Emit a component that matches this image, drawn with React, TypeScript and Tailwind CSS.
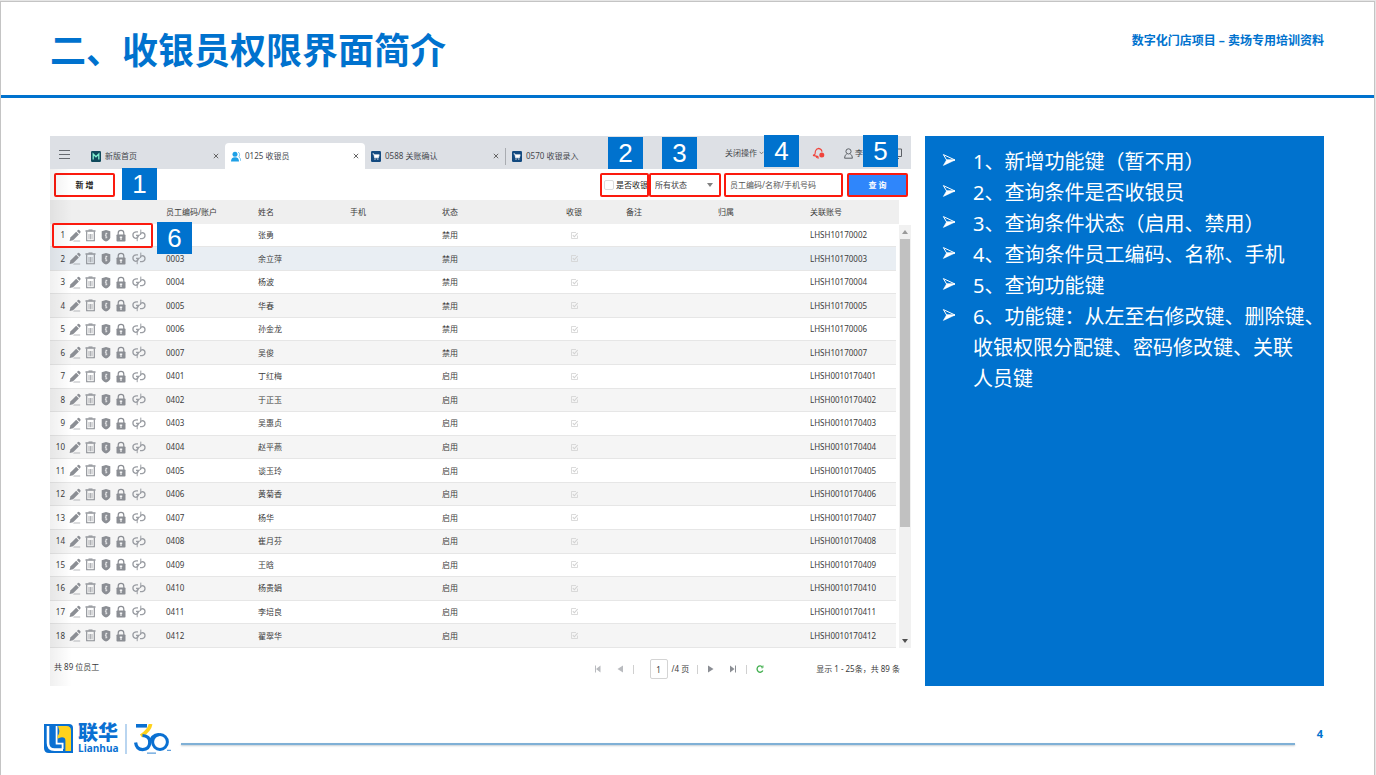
import { useState } from "react";
import type { ReactNode } from "react";

type Cashier = {
	code?: string;
	name: string;
	status: "启用" | "禁用";
	account: string;
};

const cashiers: Cashier[] = [
	{ name: "张勇", status: "禁用", account: "LHSH10170002" },
	{ code: "0003", name: "余立萍", status: "禁用", account: "LHSH10170003" },
	{ code: "0004", name: "杨波", status: "禁用", account: "LHSH10170004" },
	{ code: "0005", name: "华春", status: "禁用", account: "LHSH10170005" },
	{ code: "0006", name: "孙金龙", status: "禁用", account: "LHSH10170006" },
	{ code: "0007", name: "吴俊", status: "禁用", account: "LHSH10170007" },
	{ code: "0401", name: "丁红梅", status: "启用", account: "LHSH0010170401" },
	{ code: "0402", name: "于正玉", status: "启用", account: "LHSH0010170402" },
	{ code: "0403", name: "吴惠贞", status: "启用", account: "LHSH0010170403" },
	{ code: "0404", name: "赵平燕", status: "启用", account: "LHSH0010170404" },
	{ code: "0405", name: "谈玉玲", status: "启用", account: "LHSH0010170405" },
	{ code: "0406", name: "黄菊香", status: "启用", account: "LHSH0010170406" },
	{ code: "0407", name: "杨华", status: "启用", account: "LHSH0010170407" },
	{ code: "0408", name: "崔月芬", status: "启用", account: "LHSH0010170408" },
	{ code: "0409", name: "王晗", status: "启用", account: "LHSH0010170409" },
	{ code: "0410", name: "杨贵娟", status: "启用", account: "LHSH0010170410" },
	{ code: "0411", name: "李培良", status: "启用", account: "LHSH0010170411" },
	{ code: "0412", name: "翟翠华", status: "启用", account: "LHSH0010170412" },
];

const notes: string[][] = [
	["1、新增功能键（暂不用）"],
	["2、查询条件是否收银员"],
	["3、查询条件状态（启用、禁用）"],
	["4、查询条件员工编码、名称、手机"],
	["5、查询功能键"],
	["6、功能键：从左至右修改键、删除键、", "收银权限分配键、密码修改键、关联", "人员键"],
];

/* Row action icons */

function PencilIcon() {
	return (
		<svg viewBox="0 0 12 13" className="h-[13px] w-[12px]" fill="#8b8e94">
			<path d="M0.6 12 1.4 8.6 7.2 2.8 9.9 5.5 4.1 11.2Z" />
			<path d="M7.9 2.1 9 1Q9.6.5 10.2 1L11.4 2.2Q12 2.9 11.4 3.5L10.5 4.7Z" />
			<path d="M5 11.4H11.2V12.4H4Z" opacity=".6" />
		</svg>
	);
}

function TrashIcon() {
	return (
		<svg viewBox="0 0 11 13" className="h-[13px] w-[11px]" fill="none" stroke="#8b8e94">
			<path d="M0.5 2H10.5" strokeWidth="1.4" />
			<path d="M3.5 1H7.5" strokeWidth="1" />
			<path d="M1.7 2.5V11.8H9.3V2.5" strokeWidth="1.1" />
			<path d="M4 5V10.3M5.5 5V10.3M7 5V10.3" strokeWidth=".9" opacity=".75" />
		</svg>
	);
}

function ShieldIcon() {
	return (
		<svg viewBox="0 0 10 13" className="h-[13px] w-[10px]">
			<path d="M5 1 9.3 2.3V8.2Q9.3 10.8 5 12.5 0.7 10.8.7 8.2V2.3Z" fill="#8b8e94" />
			<path d="M5 3.8V9.4M5 4.4H6.3M5 6.2H3.9M5 8.2H6.3" stroke="#f4f4f5" strokeWidth=".9" />
		</svg>
	);
}

function LockIcon() {
	return (
		<svg viewBox="0 0 10 13" className="h-[13px] w-[10px]">
			<path d="M2.2 6V4Q2.2 1.3 5 1.3T7.8 4V6" fill="none" stroke="#8b8e94" strokeWidth="1.2" />
			<rect x=".5" y="5.5" width="9" height="7" rx=".8" fill="#8b8e94" />
			<path d="M3.8 7.6H6.2V9H5.6V11H4.4V9H3.8Z" fill="#f4f4f5" />
		</svg>
	);
}

function UnlinkIcon() {
	return (
		<svg viewBox="0 0 14 13" className="h-[13px] w-[14px]" fill="none" stroke="#9b9ea4" strokeWidth="1.3">
			<path d="M6 2.8H4Q.9 3.1.9 6.1T3.8 9.4Q6 9.2 6.4 6.4H4" />
			<path d="M8 9.6H10.2Q13 9.2 13 6.5T10.2 3.6Q8.6 3.8 8.2 5.6" />
			<path d="M8.8.6V5.4L5.2 7.6V12.2" strokeWidth="1" />
		</svg>
	);
}

function CartIcon() {
	return (
		<svg viewBox="0 0 10 11" className="h-[11px] w-[10px]">
			<rect width="10" height="11" rx="1.2" fill="#134a80" />
			<path d="M1.6 2.8H2.8L3.6 6.8H7.4L8.2 3.8H3" fill="#fff" stroke="#fff" strokeWidth=".7" />
			<path d="M3.4 8.1H4.6M6.2 8.1H7.4" stroke="#fff" strokeWidth="1" />
		</svg>
	);
}

function HomeIcon() {
	return (
		<svg viewBox="0 0 10 11" className="h-[11px] w-[10px]">
			<rect width="10" height="11" rx="1.2" fill="#0f4a5c" />
			<path d="M2.2 8.4V3L5 5.8 7.8 3V8.4" fill="none" stroke="#7ff0d0" strokeWidth="1.3" />
		</svg>
	);
}

function PeopleIcon() {
	return (
		<svg viewBox="0 0 10 11" className="h-[11px] w-[10px]">
			<circle cx="4" cy="3.2" r="2.5" fill="#1ea0e6" />
			<path d="M0 10.5Q0 6.2 4 6.2T8 10.5Z" fill="#1ea0e6" />
			<path d="M7 1.2Q9 1.8 8.6 3.8T7.8 6Q10 7 9.8 10" fill="none" stroke="#7cc8f2" strokeWidth="1" />
		</svg>
	);
}

function Badge({ children, className }: { children: ReactNode; className: string }) {
	return (
		<span
			className={`absolute z-10 flex h-[32px] w-[35px] items-center justify-center bg-[#0072ce] font-['Liberation_Sans',sans-serif] text-[26px] leading-none text-white ${className}`}
		>
			{children}
		</span>
	);
}

type TabProps = { icon: ReactNode; label: string; active?: boolean; closable?: boolean };

function Tab({ icon, label, active = false, closable = true }: TabProps) {
	return (
		<div
			className={`flex h-[26px] w-[140px] shrink-0 items-center gap-1 px-[6px] text-[#45484d] ${active ? "rounded-t-[4px] bg-white" : ""}`}
		>
			<button type="button" className="flex flex-1 items-center gap-1 text-left">
				{icon}
				{label}
			</button>
			{closable && (
				<button type="button" aria-label={`关闭 ${label}`}>
					<svg viewBox="0 0 6 6" className="size-[6px]" stroke="#666" strokeWidth="1">
						<path d="M.8.8 5.2 5.2M5.2.8.8 5.2" />
					</svg>
				</button>
			)}
		</div>
	);
}

function TabBar() {
	return (
		<div className="flex h-[33px] items-end justify-between bg-[#dde0e5]">
			<div className="flex items-end">
				<button type="button" aria-label="菜单" className="flex h-[30px] w-[35px] items-center pl-[9px]">
					<svg viewBox="0 0 11 9" className="h-[9px] w-[11px]" stroke="#666a70" strokeWidth="1">
						<path d="M0 .5H11M0 4.5H11M0 8.5H11" />
					</svg>
				</button>
				<Tab icon={<HomeIcon />} label="新版首页" />
				<Tab icon={<PeopleIcon />} label="0125 收银员" active />
				<Tab icon={<CartIcon />} label="0588 关账确认" />
				<span className="mb-[4px] h-[17px] w-px bg-[#a9acb1]" />
				<Tab icon={<CartIcon />} label="0570 收银录入" closable={false} />
			</div>
			<div className="flex h-[32px] items-center text-[#45484d]">
				<button type="button" className="flex items-center gap-[2px]">
					关闭操作
					<svg viewBox="0 0 5 4" className="h-[4px] w-[5px]" fill="none" stroke="#666" strokeWidth=".8">
						<path d="M.6.8 2.5 2.8 4.4.8" />
					</svg>
				</button>
				<button type="button" aria-label="通知" className="ml-[48px]">
					<svg viewBox="0 0 13 12" className="h-[12px] w-[13px]" fill="none" stroke="#f0443c" strokeWidth="1.1">
						<path d="M1 8.4 3 7.2 3.4 4.2Q4.2 1.6 6.6 1.4 9.6 1.8 10 4.8" />
						<path d="M1 8.4 6.4 9.6M4 9.6Q5 11.6 7 10.8" />
						<circle cx="9.8" cy="8" r="2.5" fill="#f0443c" stroke="none" />
					</svg>
				</button>
				<button type="button" className="ml-[19px] flex items-center gap-[2px]">
					<svg viewBox="0 0 9 11" className="h-[11px] w-[9px]" fill="none" stroke="#5c6066" strokeWidth="1">
						<circle cx="4.5" cy="3.4" r="2.6" />
						<path d="M2.4 6.2Q.6 7.4.6 10.2H8.4Q8.4 7.4 6.6 6.2" />
					</svg>
					李
				</button>
				<button type="button" aria-label="全屏" className="mr-[9px] ml-[28px]">
					<svg viewBox="0 0 11 11" className="h-[11px] w-[11px]" fill="none" stroke="#5c6066" strokeWidth="1">
						<path d="M.5 1H10.5V8.5H.5ZM3 10.5H8" />
					</svg>
				</button>
			</div>
		</div>
	);
}

function Toolbar() {
	const [onlyCashier, setOnlyCashier] = useState(false);
	const [keyword, setKeyword] = useState("");
	const redBox = "h-[24px] rounded-[2px] border-2 border-[#fb1a0e] bg-white";

	return (
		<div className="flex h-[31px] items-center justify-between pr-[3px] pl-[4px]">
			<button type="button" className={`${redBox} w-[61px] font-bold text-[#222]`}>
				新 增
			</button>
			<div className="flex items-center">
				<label className={`${redBox} flex w-[49px] items-center gap-[2px] overflow-hidden pl-[2px] whitespace-nowrap text-[#222]`}>
					<input
						type="checkbox"
						checked={onlyCashier}
						onChange={(e) => setOnlyCashier(e.target.checked)}
						className="size-[10px] shrink-0 appearance-none rounded-[2px] border border-[#dcdcdc] checked:bg-[#2f86fb]"
					/>
					是否收银
				</label>
				<div className={`${redBox} relative w-[72px]`}>
					<select aria-label="状态" className="size-full appearance-none bg-transparent px-[4px] text-[#444] outline-none">
						<option>所有状态</option>
						<option>启用</option>
						<option>禁用</option>
					</select>
					<svg viewBox="0 0 6 4" className="pointer-events-none absolute top-[8px] right-[6px] h-[4px] w-[6px]" fill="#808080">
						<path d="M0 0H6L3 4Z" />
					</svg>
				</div>
				<input
					type="text"
					aria-label="员工编码/名称/手机号码"
					placeholder="员工编码/名称/手机号码"
					value={keyword}
					onChange={(e) => setKeyword(e.target.value)}
					className={`${redBox} ml-[3px] w-[119px] px-[4px] outline-none placeholder:text-[#555]`}
				/>
				<button
					type="button"
					className="ml-[4px] h-[24px] w-[61px] rounded-[2px] border-2 border-[#fb1a0e] bg-[#2f86fb] font-bold text-white"
				>
					查 询
				</button>
			</div>
		</div>
	);
}

function CashierTable() {
	return (
		<div className="flex">
			<div className="min-w-0 flex-1">
				<table className="h-[448px] w-full table-fixed border-collapse text-left text-[#3c3c3c]">
					<colgroup>
						<col className="w-[110px]" />
						<col span={8} />
						<col className="w-[3px]" />
					</colgroup>
					<thead>
						<tr className="h-[24px] bg-[#efefef]">
							<th aria-label="操作" />
							<th className="px-[6px] font-normal">员工编码/账户</th>
							<th className="px-[6px] font-normal">姓名</th>
							<th className="px-[6px] font-normal">手机</th>
							<th className="px-[6px] font-normal">状态</th>
							<th className="px-[6px] text-center font-normal">收银</th>
							<th className="px-[6px] font-normal">备注</th>
							<th className="px-[6px] font-normal">归属</th>
							<th className="px-[6px] font-normal">关联账号</th>
							<th className="p-0" />
						</tr>
					</thead>
					<tbody>
						{cashiers.map((row, i) => {
							const bg = i === 1 ? "bg-[#e9eef3]" : i % 2 ? "bg-[#f5f5f5]" : "bg-white";
							const cell = `border-b border-[#e6e6e6] px-[6px] py-0 whitespace-nowrap ${bg}`;
							return (
								<tr key={row.account}>
									<td className={`border-b border-[#e6e6e6] p-0 ${bg}`}>
										<div className="flex items-center">
											<span className="mr-[4px] w-[15px] text-right">{i + 1}</span>
											<button type="button" aria-label="修改" className="mr-[4px]">
												<PencilIcon />
											</button>
											<button type="button" aria-label="删除" className="mr-[5px]">
												<TrashIcon />
											</button>
											<button type="button" aria-label="收银权限分配" className="mr-[5px]">
												<ShieldIcon />
											</button>
											<button type="button" aria-label="密码修改" className="mr-[6px]">
												<LockIcon />
											</button>
											<button type="button" aria-label="关联人员">
												<UnlinkIcon />
											</button>
										</div>
									</td>
									<td className={cell}>{row.code}</td>
									<td className={cell}>{row.name}</td>
									<td className={cell} />
									<td className={cell}>{row.status}</td>
									<td className={cell}>
										<svg viewBox="0 0 7 7" className="mx-auto size-[7px]" fill="none" stroke="#d2d2d2">
											<path d="M6.5 3.6V6.5H.5V.5H5" strokeWidth=".8" />
											<path d="M1.8 3.2 3.3 4.8 6.6 1" strokeWidth="1.1" />
										</svg>
									</td>
									<td className={cell} />
									<td className={cell} />
									<td className={cell}>{row.account}</td>
									<td className="p-0" />
								</tr>
							);
						})}
					</tbody>
				</table>
			</div>
			{/* Scrollbar */}
			<div className="mt-[25px] flex w-[12px] shrink-0 flex-col items-center bg-[#f1f1f1] py-[5px]">
				<svg viewBox="0 0 6 4" className="h-[4px] w-[6px]" fill="#9a9a9a">
					<path d="M0 4H6L3 0Z" />
				</svg>
				<div className="mt-[5px] h-[288px] w-[10px] bg-[#c1c1c1]" />
				<svg viewBox="0 0 6 4" className="mt-auto h-[4px] w-[6px]" fill="#505050">
					<path d="M0 0H6L3 4Z" />
				</svg>
			</div>
		</div>
	);
}

function Pager() {
	const line = "h-[9px] w-px bg-[#d0d0d0]";
	return (
		<div className="flex h-[38px] items-center pr-[11px] pl-[4px] text-[#3c3c3c]">
			<span>共 89 位员工</span>
			<div className="ml-auto flex items-center pt-[4px]">
				<button type="button" aria-label="第一页">
					<svg viewBox="0 0 6 8" className="h-[8px] w-[6px]" fill="#b9bbbf">
						<path d="M0 .5H1V7.5H0ZM5.5 .5V7.5L1 4Z" />
					</svg>
				</button>
				<button type="button" aria-label="上一页" className="mr-[10px] ml-[16px]">
					<svg viewBox="0 0 6 8" className="h-[8px] w-[6px]" fill="#b9bbbf">
						<path d="M6 .5V7.5L.5 4Z" />
					</svg>
				</button>
				<span className={line} />
				<label className="mr-[8px] ml-[16px] flex items-center gap-[4px]">
					<input
						type="text"
						aria-label="页码"
						defaultValue="1"
						className="h-[20px] w-[18px] rounded-[2px] border border-[#d4d4d4] text-center"
					/>
					/4 页
				</label>
				<span className={line} />
				<button type="button" aria-label="下一页" className="mr-[16px] ml-[10px]">
					<svg viewBox="0 0 6 8" className="h-[8px] w-[6px]" fill="#8b8e94">
						<path d="M0 .5V7.5L5.5 4Z" />
					</svg>
				</button>
				<button type="button" aria-label="最后一页" className="mr-[10px]">
					<svg viewBox="0 0 6 8" className="h-[8px] w-[6px]" fill="#8b8e94">
						<path d="M0 .5V7.5L4.5 4ZM5 .5H6V7.5H5Z" />
					</svg>
				</button>
				<span className={line} />
				<button type="button" aria-label="刷新" className="mr-[52px] ml-[9px]">
					<svg viewBox="0 0 8 8" className="size-[8px]" fill="none" stroke="#3fae4c" strokeWidth="1.3">
						<path d="M6.8 5.4A3 3.2 0 1 1 6.4 2" />
						<path d="M7 .4V2.8H5.2" strokeWidth=".8" />
					</svg>
				</button>
				<span>显示 1 - 25条，共 89 条</span>
			</div>
		</div>
	);
}

function Screenshot() {
	return (
		<section className="relative min-w-0 flex-1 bg-white text-[8px] leading-[12px]">
			<TabBar />
			<Toolbar />
			<CashierTable />
			<Pager />
			<div className="pointer-events-none absolute top-[33px] bottom-0 left-0 w-[22px] bg-linear-to-r from-black/6 to-transparent" />
			<div className="pointer-events-none absolute top-[87px] left-[2px] h-[25px] w-[101px] rounded-[2px] border-2 border-[#fb1a0e]" />
			<Badge className="top-[32px] left-[72px]">1</Badge>
			<Badge className="top-px right-[268px]">2</Badge>
			<Badge className="top-px right-[214px]">3</Badge>
			<Badge className="-top-px right-[112px]">4</Badge>
			<Badge className="-top-px right-[13px]">5</Badge>
			<Badge className="top-[86px] left-[107px]">6</Badge>
		</section>
	);
}

function Notes() {
	return (
		<aside className="w-[399px] shrink-0 bg-[#0072ce] pt-[10px] pl-[17px] text-[20px] leading-[31px] text-white">
			<ul>
				{notes.map((lines) => (
					<li key={lines[0]} className="flex">
						<svg viewBox="0 0 14 14" className="mt-[7px] mr-[17px] h-[14px] w-[14px] shrink-0">
							<path d="M1.4 1.6 13 7H4.6Z" fill="none" stroke="#fff" strokeWidth="1" />
							<path d="M4.6 7H13L1.4 12.4Z" fill="#fff" stroke="#fff" strokeWidth=".6" />
						</svg>
						<p className="whitespace-nowrap">
							{lines.map((line) => (
								<span key={line} className="block">
									{line}
								</span>
							))}
						</p>
					</li>
				))}
			</ul>
		</aside>
	);
}

function Logo() {
	return (
		<div className="flex items-center">
			<svg viewBox="0 0 29 29" className="h-[29px] w-[29px]" fill="none">
				<path d="M0 0H25Q29 0 29 4V29H5Q0 29 0 24Z" fill="#0a70d2" />
				<path d="M4 2V19Q4 25.6 10.5 25.6H19" stroke="#fff" strokeWidth="2.6" />
				<path d="M12.6 2V19.6H18.6V25" stroke="#fff" strokeWidth="1.8" />
				<path d="M14 2H22.5Q27 2 27 6.5V27H21.4V16.4Q21.4 13.2 18 13.2 15.6 13.2 13.5 14.8V12Q15.4 10.4 15.4 7Z" fill="#ffd21c" />
			</svg>
			<div className="ml-[5px] flex w-[40px] flex-col text-[#0a70d2]">
				<span className="text-[20px] leading-[19px] font-black">联华</span>
				<span className="font-['Open_Sans',sans-serif] text-[10px] leading-[12px] font-bold">Lianhua</span>
			</div>
			<span className="mr-[7px] ml-[7px] h-[30px] w-[2px] bg-[#b9d5f0]" />
			<svg viewBox="0 0 37 30" className="h-[30px] w-[37px]" fill="none">
				<path d="M2 1.8H13" stroke="#0a70d2" strokeWidth="3.6" />
				<path d="M16.6 0Q15.5 6.5 7 12" stroke="#ffd21c" strokeWidth="3.8" />
				<path d="M8.5 11.5Q15.8 11.8 15.8 18.4 15.4 25.4 8.6 25.6 2.4 25.4 1.6 18.5" stroke="#0a70d2" strokeWidth="3.2" />
				<circle cx="26" cy="18" r="7.4" stroke="#0a70d2" strokeWidth="3" />
				<path d="M15.6 20Q17 11 25 10.6" stroke="#0a70d2" strokeWidth="3" />
				<path d="M13 29.2H22M33 26.4H37" stroke="#5e9fdc" strokeWidth="1.2" />
			</svg>
		</div>
	);
}

export default function App() {
	return (
		<div className="min-h-screen bg-[#e6e6e6] pt-px pr-px font-['Noto_Sans','Noto_Sans_CJK_SC',sans-serif]">
			<div className="flex min-h-[774px] flex-col border-x border-t border-[#c4c4c4] bg-white">
				<header className="flex h-[96px] items-start justify-between border-b-3 border-[#0072ce] pr-[50px] pl-[49px] text-[#0072ce]">
					<h1 className="mt-[23px] text-[36px] leading-[52px] font-bold">二、收银员权限界面简介</h1>
					<p className="mt-[30px] text-[12px] leading-[18px] font-bold">数字化门店项目 – 卖场专用培训资料</p>
				</header>

				<main className="flex gap-[14px] pt-[38px] pr-[50px] pl-[49px]">
					<Screenshot />
					<Notes />
				</main>

				<footer className="flex items-start pt-[37px] pr-[51px] pl-[43px]">
					<Logo />
					<div className="mt-[20px] ml-[10px] h-[2px] flex-1 bg-[#7fb0d6] shadow-[0_1px_2px_#c4ccd2]" />
					<span className="ml-[22px] text-[11px] leading-[22px] font-bold text-[#0072ce]">4</span>
				</footer>
			</div>
		</div>
	);
}
